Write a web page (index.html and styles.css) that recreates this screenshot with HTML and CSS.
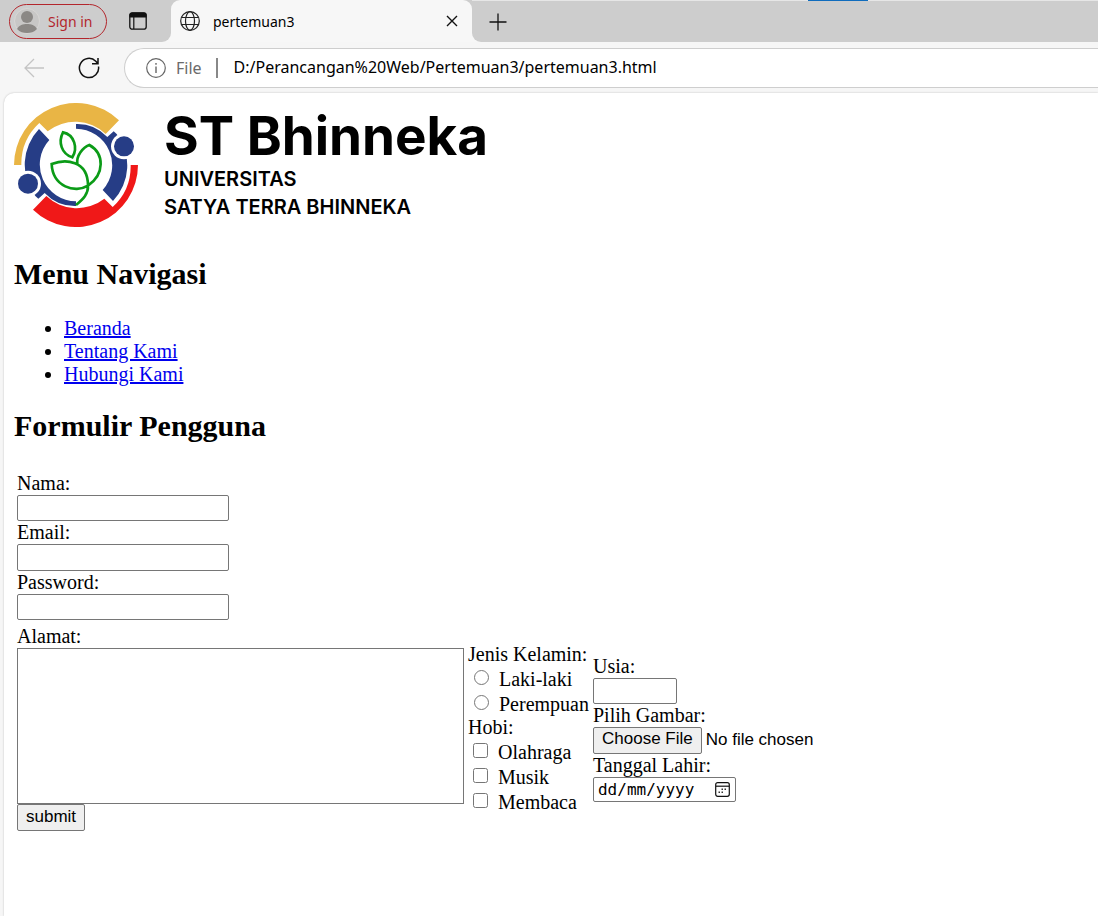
FILE: index.html
```html
<!DOCTYPE html>
<html lang="id">
<head>
<meta charset="utf-8">
<title>pertemuan3</title>
<link rel="stylesheet" href="styles.css">
</head>
<body>
<header class="browser">
  <div class="tabs">
    <div class="tabs-left">
      <button class="signin" type="button">
        <svg class="avatar" viewBox="0 0 26 26" width="26" height="26" aria-hidden="true"><circle cx="13" cy="13" r="12.5" fill="#c8c7c6" stroke="#d8d6d4"/><circle cx="13" cy="9" r="6" fill="#8b8885"/><path d="M3 21c2-4 6-5 10-5s8 1 10 5c-3 3-6 4-10 4s-7-1-10-4z" fill="#8b8885"/></svg>
        <span>Sign in</span>
      </button>
      <button class="icon-button" type="button" aria-label="Tab actions">
        <svg viewBox="0 0 18 18" width="18" height="18"><rect x=".8" y=".8" width="16.4" height="16.4" rx="2.5" fill="none" stroke="#111" stroke-width="1.3"/><path d="M.5 5.500V3Q.5.500 3 .500h12Q17.500.500 17.500 3v2.500z" fill="#111"/><path d="M4.800 5v12" stroke="#111" stroke-width="1.200"/></svg>
      </button>
    </div>
    <div class="tab">
      <svg viewBox="0 0 20 20" width="20" height="20" fill="none" stroke="#222" stroke-width="1.200" aria-hidden="true"><circle cx="10" cy="10" r="9.300"/><ellipse cx="10" cy="10" rx="4.500" ry="9.300"/><path d="M1.500 6.500h17M1.500 13.500h17"/></svg>
      <span class="tab-title">pertemuan3</span>
      <button class="icon-button" type="button" aria-label="Close tab"><svg viewBox="0 0 12 12" width="12" height="12" stroke="#111" stroke-width="1.400"><path d="M1 1l10 10M11 1L1 11"/></svg></button>
    </div>
    <div class="tabs-right">
      <button class="icon-button" type="button" aria-label="New tab"><svg viewBox="0 0 18 18" width="18" height="18" stroke="#111" stroke-width="1.300"><path d="M9 .5v17M.5 9h17"/></svg></button>
      <span class="progress"></span>
    </div>
  </div>
  <div class="toolbar">
    <button class="icon-button" type="button" aria-label="Back"><svg viewBox="0 0 20 20" width="20" height="20" fill="none" stroke="#c4c4c4" stroke-width="1.300"><path d="M20 10H1M10 1L1 10l9 9"/></svg></button>
    <button class="icon-button" type="button" aria-label="Refresh"><svg viewBox="0 0 22 22" width="22" height="22" fill="none" stroke="#111" stroke-width="1.500"><path d="M20.500 9.500A9.600 9.600 0 1 1 17.800 4.200L19.800 6.500M20 1v5.800h-6"/></svg></button>
    <div class="address">
      <svg viewBox="0 0 20 20" width="20" height="20" fill="none" stroke="#666" stroke-width="1.200" aria-hidden="true"><circle cx="10" cy="10" r="9.300"/><path d="M10 8.500V15M10 5v1.700" stroke-width="1.400"/></svg>
      <span class="scheme">File</span>
      <input class="url" type="text" aria-label="Address" value="D:/Perancangan%20Web/Pertemuan3/pertemuan3.html">
    </div>
  </div>
</header>
<main class="page">
  <div class="logo">
    <svg viewBox="42 32 372 372" width="124" height="124" aria-hidden="true">
      <defs>
        <path id="band" d="M42 218A186 186 0 0 1 357 84L317 125A133 133 0 0 0 143 117L118 92A167 167 0 0 0 64 218Z"/>
        <g id="figure"><path d="M117 110A155 155 0 0 0 106 311L115 319L134 302A124 124 0 0 0 228 341V327A110 110 0 0 1 148 143Z" fill="#263d86"/><circle cx="84" cy="274" r="39" fill="#fff"/><circle cx="84" cy="274" r="30" fill="#263d86"/></g>
      </defs>
      <use href="#band" fill="#e9b545"/>
      <use href="#band" fill="#f01818" transform="rotate(180 228 218)"/>
      <use href="#figure"/>
      <use href="#figure" transform="rotate(180 228 218)"/>
      <path d="M189 120C174 149 184 184 217 195C234 168 224 127 189 120ZM232 216C228 190 249 165 268 158C314 184 314 246 264 280M155 215C195 200 264 202 264 280C225 304 158 283 155 215ZM264 280C265 305 250 320 228 338" fill="none" stroke="#0b9b17" stroke-width="8"/>
    </svg>
    <div class="logo-text">
      <strong class="logo-name">ST Bhinneka</strong>
      <span>UNIVERSITAS</span>
      <span>SATYA TERRA BHINNEKA</span>
    </div>
  </div>
  <nav>
    <h2>Menu Navigasi</h2>
    <ul>
      <li><a href="#beranda">Beranda</a></li>
      <li><a href="#tentang">Tentang Kami</a></li>
      <li><a href="#hubungi">Hubungi Kami</a></li>
    </ul>
  </nav>
  <h2>Formulir Pengguna</h2>
  <form>
    <div class="column">
      <label for="nama">Nama:</label><input class="field" id="nama" type="text">
      <label for="email">Email:</label><input class="field" id="email" type="email">
      <label for="password">Password:</label><input class="field" id="password" type="password">
    </div>
    <div class="columns">
      <div class="column">
        <label for="alamat">Alamat:</label>
        <textarea id="alamat"></textarea>
        <button class="submit" type="submit">submit</button>
      </div>
      <div class="column">
        <span>Jenis Kelamin:</span>
        <label class="option"><input type="radio" name="jk">Laki-laki</label>
        <label class="option"><input type="radio" name="jk">Perempuan</label>
        <span>Hobi:</span>
        <label class="option"><input type="checkbox">Olahraga</label>
        <label class="option"><input type="checkbox">Musik</label>
        <label class="option"><input type="checkbox">Membaca</label>
      </div>
      <div class="column">
        <label for="usia">Usia:</label><input class="field age" id="usia" type="text" inputmode="numeric">
        <label for="gambar">Pilih Gambar:</label><input class="file" id="gambar" type="file">
        <label for="tanggal">Tanggal Lahir:</label>
        <div class="date">
          <input id="tanggal" type="text" placeholder="dd/mm/yyyy">
          <button class="icon-button" type="button" aria-label="Pilih tanggal"><svg viewBox="0 0 15 15" width="15" height="15"><rect x=".7" y=".7" width="13.600" height="13.600" rx="2" fill="none" stroke="#111" stroke-width="1.200"/><path d="M1 4.200h13" stroke="#111" stroke-width="1.200"/><path d="M6.500 6.500H8V8H6.500zM9.500 6.500H11V8H9.500zM3.500 9.500H5V11H3.500zM6.500 9.500H8V11H6.500z" fill="#333"/></svg></button>
        </div>
      </div>
    </div>
  </form>
</main>
</body>
</html>
```
FILE: styles.css
```css
* { box-sizing: border-box; }
body {
  margin: 0;
  min-height: 100vh;
  display: flex;
  flex-direction: column;
  background: #f6f6f6;
  color: #000;
  font: 20px/23px "Liberation Serif", "Times New Roman", serif;
}
button { font: inherit; color: inherit; }
.browser { font-family: "Noto Sans", "Open Sans", sans-serif; }
.icon-button { display: flex; padding: 0; border: 0; background: none; }

.tabs { display: flex; height: 42px; background: linear-gradient(#cdcdcd 50%, #f7f7f7 50%); }
.tabs-left, .tabs-right { display: flex; align-items: center; background: #cdcdcd; }
.tabs-left { width: 171px; gap: 22px; padding-left: 9px; border-radius: 0 0 9px 0; }
.tabs-right { flex: 1; align-items: stretch; padding-left: 17px; border-top: 1px solid #e6e6e6; border-radius: 0 0 0 9px; }
.tabs-right .icon-button { align-items: center; }
.progress { width: 60px; height: 1px; margin: -1px auto 0 301px; background: #0f6cbd; }
.signin {
  display: flex;
  align-items: center;
  gap: 8px;
  width: 98px;
  height: 35px;
  padding: 0 4px;
  border: 1px solid #b3262c;
  border-radius: 18px;
  background: none;
  color: #b3262c;
  font-size: 14px;
  white-space: nowrap;
}
.avatar { flex: none; }
.tab {
  display: flex;
  align-items: center;
  gap: 13px;
  width: 301px;
  padding: 0 14px 0 9px;
  border-radius: 9px 9px 0 0;
  background: #f7f7f7;
  font-size: 14px;
}
.tab-title { flex: 1; }

.toolbar { display: flex; align-items: center; height: 51px; padding-left: 24px; gap: 34px; }
.address {
  display: flex;
  align-items: center;
  flex: 1;
  height: 40px;
  margin-left: -10px;
  padding-left: 21px;
  border: 1px solid #cecece;
  border-right: 0;
  border-radius: 20px 0 0 20px;
  background: #fff;
  font-size: 16px;
}
.scheme { margin-left: 10px; padding-right: 14px; border-right: 2px solid #888; line-height: 20px; color: #6b6b6b; }
.url { flex: 1; margin-left: 16px; padding: 0; border: 0; background: none; font: inherit; outline: 0; }

.page {
  flex: 1;
  margin-left: 4px;
  padding: 10px;
  border-radius: 10px 0 0 0;
  background: #fff;
  box-shadow: 0 0 2px #bbb;
}
.logo { display: flex; gap: 26px; }
.logo-text { display: flex; flex-direction: column; font: 600 20px/28px Inter, sans-serif; }
.logo-name { margin-top: 4px; font-size: 53px; font-weight: 700; line-height: 58px; }
h2 { margin: 0; padding: 30px 0 25px; font-size: 30px; line-height: 34px; }
ul { margin: 0; padding-left: 50px; }
nav h2 { padding-bottom: 26px; }
nav ul { margin-bottom: -7px; }
a { color: #0000ee; }

form { padding-left: 3px; padding-top: 4px; }
.column { display: flex; flex-direction: column; align-items: flex-start; }
.columns { display: flex; align-items: center; gap: 4px; margin-top: 5px; }
.field { width: 212px; height: 26px; padding: 2px; border: 1px solid #767676; border-radius: 2px; font: 17px "Liberation Sans", Arial, sans-serif; }
#email { height: 27px; }
.age { width: 84px; }
textarea { width: 447px; height: 156px; border: 1px solid #767676; resize: none; font: 16px "Liberation Mono", monospace; }
.submit, .file::file-selector-button {
  height: 27px;
  padding: 0 8px;
  border: 1px solid #767676;
  border-radius: 2px;
  background: #efefef;
  font: 17px "Liberation Sans", Arial, sans-serif;
}
.submit, .file::file-selector-button { padding-bottom: 2px; }
.file { height: 27px; font: 17px "Liberation Sans", Arial, sans-serif; }
.file::file-selector-button { margin-right: 4px; }
.option { display: flex; align-items: flex-start; height: 25px; padding-top: 2px; }
.option input { width: 15px; height: 15px; margin: 2px 10px 0 6px; }
.option input[type="checkbox"] { margin-left: 5px; }
.date { display: flex; align-items: center; width: 143px; height: 25px; padding: 0 5px 0 4px; border: 1px solid #767676; border-radius: 2px; }
.date input { flex: 1; min-width: 0; padding: 0; border: 0; outline: 0; font: 16px "DejaVu Sans Mono", monospace; }
.date input::placeholder { color: #000; }
```
